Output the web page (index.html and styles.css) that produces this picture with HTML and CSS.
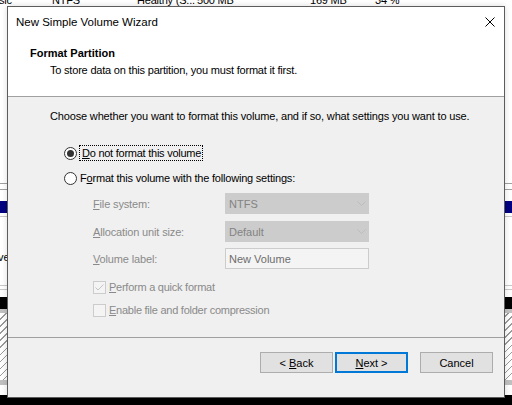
FILE: index.html
```html
<!DOCTYPE html>
<html>
<head>
<meta charset="utf-8">
<link rel="stylesheet" href="styles.css">
</head>
<body>
<div class="desk">
  <div class="toprow">
    <div class="toprow-text">
      <span class="c c1">sic</span><span class="c c2">NTFS</span><span class="c c3">Healthy (S...</span><span class="c c4">500 MB</span><span class="c c5">169 MB</span><span class="c c6">34 %</span>
    </div>
  </div>
  <div class="blank h177"></div>
  <div class="rule"></div>
  <div class="blank h5"></div>
  <div class="rule"></div>
  <div class="blank h11"></div>
  <div class="navy"></div>
  <div class="blank h4"></div>
  <div class="rule light"></div>
  <div class="blank h33"></div>
  <div class="vrow"><span class="ve">ve</span></div>
  <div class="blank h21"></div>
  <div class="rule light"></div>
  <div class="blank h4"></div>
  <div class="rule light"></div>
  <div class="blank h7"></div>
  <div class="blackbar"></div>
  <div class="greyband"></div>
  <div class="hatch"></div>
  <div class="greyband2"></div>
  <div class="blank h10"></div>
  <div class="taskbar"></div>
</div>

<div class="dialog">
  <div class="top">
    <div class="titlebar">
      <span class="title">New Simple Volume Wizard</span>
      <svg class="close" width="10" height="10" viewBox="0 0 10 10"><path d="M0.5 0.5 L9.5 9.5 M9.5 0.5 L0.5 9.5" stroke="#000" stroke-width="1" fill="none"/></svg>
    </div>
    <div class="header">
      <div class="h-title">Format Partition</div>
      <div class="h-sub">To store data on this partition, you must format it first.</div>
    </div>
  </div>
  <div class="body">
    <div class="intro">Choose whether you want to format this volume, and if so, what settings you want to use.</div>
    <div class="options">
      <div class="radio-row r1">
        <span class="radio checked"></span>
        <span class="focus"><u>D</u>o not format this volume</span>
      </div>
      <div class="radio-row r2">
        <span class="radio"></span>
        <span class="rlabel">F<u>o</u>rmat this volume with the following settings:</span>
      </div>
      <div class="settings">
        <div class="field f1">
          <span class="flabel"><u>F</u>ile system:</span>
          <span class="combo"><span>NTFS</span>
            <svg class="chev" width="9" height="5" viewBox="0 0 9 5"><path d="M0.5 0.5 L4.5 4.5 L8.5 0.5" stroke="#bdbdbd" fill="none"/></svg>
          </span>
        </div>
        <div class="field f2">
          <span class="flabel"><u>A</u>llocation unit size:</span>
          <span class="combo"><span>Default</span>
            <svg class="chev" width="9" height="5" viewBox="0 0 9 5"><path d="M0.5 0.5 L4.5 4.5 L8.5 0.5" stroke="#bdbdbd" fill="none"/></svg>
          </span>
        </div>
        <div class="field f3">
          <span class="flabel"><u>V</u>olume label:</span>
          <span class="textbox">New Volume</span>
        </div>
        <div class="check-row c-1">
          <span class="checkbox">
            <svg width="11" height="11" viewBox="0 0 11 11"><path d="M1.5 5.5 L4 8 L9.5 2.5" stroke="#c4c4c4" stroke-width="1" fill="none"/></svg>
          </span>
          <span class="clabel"><u>P</u>erform a quick format</span>
        </div>
        <div class="check-row c-2">
          <span class="checkbox"></span>
          <span class="clabel"><u>E</u>nable file and folder compression</span>
        </div>
      </div>
    </div>
  </div>
  <div class="footer">
    <button class="btn">&lt; <u>B</u>ack</button>
    <button class="btn default"><u>N</u>ext &gt;</button>
    <button class="btn cancel">Cancel</button>
  </div>
</div>
</body>
</html>
```

FILE: styles.css
```css
html, body {
  margin: 0;
  padding: 0;
}
body {
  width: 512px;
  height: 405px;
  overflow: hidden;
  position: relative;
  background: #fff;
  font-family: "Liberation Sans", Arial, sans-serif;
  font-size: 11px;
  color: #000;
}
u { text-decoration: underline; text-underline-offset: 1px; }

/* background disk management window */
.desk {
  display: flex;
  flex-direction: column;
  width: 512px;
  height: 405px;
}
.toprow {
  height: 6px;
  overflow: hidden;
  flex: none;
}
.toprow-text {
  margin-top: -6px;
  line-height: 12px;
  display: flex;
  white-space: nowrap;
  letter-spacing: -0.2px;
}
.c1 { width: 53px; margin-left: -1px; }
.c2 { width: 85px; }
.c3 { width: 60px; overflow: hidden; }
.c4 { width: 113px; }
.c5 { width: 65px; }
.blank { flex: none; }
.h177 { height: 177px; }
.h5 { height: 5px; }
.h11 { height: 11px; }
.h4 { height: 3px; }
.h33 { height: 33px; }
.h21 { height: 21px; }
.h7 { height: 7px; }
.h10 { height: 10px; }
.rule { height: 1px; background: #a0a0a0; flex: none; }
.rule.light { background: #c8c8c8; }
.navy { height: 12px; background: #000080; flex: none; }
.vrow { height: 14px; line-height: 14px; flex: none; }
.ve { margin-left: -2px; }
.blackbar { height: 12px; background: #000; flex: none; }
.greyband { height: 4px; background: #c0c0c0; flex: none; }
.hatch {
  height: 67px;
  flex: none;
  background: repeating-linear-gradient(135deg, #fff 0, #fff 4px, #9a9a9a 4px, #9a9a9a 5px);
}
.greyband2 { height: 5px; background: #c0c0c0; flex: none; }
.taskbar { flex: 1; background: #000; }

/* dialog */
.dialog {
  position: absolute;
  left: 7px;
  top: 6px;
  width: 498px;
  height: 392px;
  box-sizing: border-box;
  border: 1px solid #5c5c5c;
  background: #f0f0f0;
  display: flex;
  flex-direction: column;
  box-shadow: 0 0 6px rgba(0,0,0,0.15);
}
.top {
  height: 89px;
  flex: none;
  background: #fff;
  border-bottom: 1px solid #a0a0a0;
}
.titlebar {
  height: 30px;
  display: flex;
  align-items: center;
  justify-content: space-between;
  padding-left: 8px;
  padding-right: 9px;
}
.title { font-size: 11.5px; line-height: 16px; }
.close { display: block; }
.header {
  padding-left: 22px;
  padding-top: 9px;
}
.h-title { font-weight: bold; line-height: 15px; }
.h-sub { padding-left: 20px; line-height: 15px; margin-top: 2px; letter-spacing: -0.2px; }

.body {
  flex: 1;
  padding: 12px 0 0 42px;
}
.intro { line-height: 15px; letter-spacing: -0.16px; }
.options { padding-left: 14px; margin-top: 21px; }
.radio-row {
  display: flex;
  align-items: center;
  height: 16px;
}
.r2 { margin-top: 9px; }
.radio {
  width: 13px;
  height: 13px;
  box-sizing: border-box;
  border: 1px solid #333;
  border-radius: 50%;
  background: #fff;
  display: flex;
  align-items: center;
  justify-content: center;
  flex: none;
}
.radio.checked::after {
  content: "";
  width: 7px;
  height: 7px;
  border-radius: 50%;
  background: #333;
}
.focus {
  margin-left: 2px;
  padding: 0 1px 0 2px;
  border: 1px dotted #000;
  line-height: 14px;
  letter-spacing: -0.25px;
}
.rlabel { margin-left: 3px; letter-spacing: -0.2px; }

.settings { padding-left: 29px; margin-top: 7px; }
.field {
  display: flex;
  align-items: center;
  height: 21px;
}
.f2 { margin-top: 7px; }
.f3 { margin-top: 6px; }
.flabel { width: 132px; color: #8a8a8a; flex: none; letter-spacing: -0.15px; }
.flabel u { text-decoration-color: #8a8a8a; }
.combo {
  width: 144px;
  height: 21px;
  box-sizing: border-box;
  background: #cccccc;
  border: 1px solid #cccccc;
  color: #838383;
  padding-left: 3px;
  padding-right: 2px;
  display: flex;
  align-items: center;
  justify-content: space-between;
}
.chev { display: block; }
.textbox {
  width: 144px;
  height: 21px;
  box-sizing: border-box;
  border: 1px solid #cccccc;
  background: #f4f4f4;
  color: #6d6d6d;
  padding-left: 3px;
  display: flex;
  align-items: center;
}
.check-row {
  display: flex;
  align-items: center;
  height: 16px;
}
.c-1 { margin-top: 10px; }
.c-2 { margin-top: 7px; }
.checkbox {
  width: 13px;
  height: 13px;
  box-sizing: border-box;
  border: 1px solid #cccccc;
  background: #f4f4f4;
  flex: none;
  display: flex;
  align-items: center;
  justify-content: center;
}
.checkbox svg { display: block; }
.clabel { margin-left: 3px; color: #8a8a8a; letter-spacing: -0.25px; }

.footer {
  height: 45px;
  flex: none;
  border-top: 1px solid #a0a0a0;
  display: flex;
  justify-content: flex-end;
  align-items: flex-start;
  padding: 14px 11px 0 0;
  box-sizing: content-box;
}
.btn {
  width: 73px;
  height: 21px;
  box-sizing: border-box;
  border: 1px solid #adadad;
  background: #e1e1e1;
  font-family: "Liberation Sans", Arial, sans-serif;
  font-size: 11px;
  color: #000;
  padding: 0;
  margin: 0;
}
.btn.default {
  margin-left: 2px;
  border-color: #0078d7;
  box-shadow: inset 0 0 0 1px #0078d7;
}
.btn.cancel { margin-left: 12px; }
```
